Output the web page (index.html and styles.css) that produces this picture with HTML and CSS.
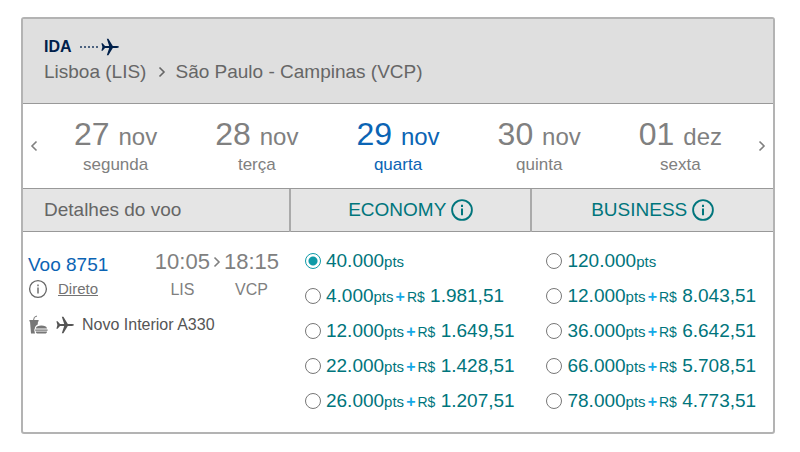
FILE: index.html
```html
<!DOCTYPE html>
<html lang="pt-BR">
<head>
    <meta charset="UTF-8">
    <meta name="viewport" content="width=device-width, initial-scale=1.0">
    <title>Voos de ida</title>
    <link rel="stylesheet" href="styles.css">
</head>
<body>

    <!-- Shared icons -->
    <svg class="sprite" aria-hidden="true">
        <symbol id="plane" viewBox="0 0 18 18">
            <path d="M0.4 5.2 L1.6 5.2 L4 8.1 L8.2 8.1 L5.8 0.8 L7.4 0.8 L11.8 8.1 L16 8.1 Q18 8.3 18 9 Q18 9.7 16 9.9 L11.8 9.9 L7.4 17.2 L5.8 17.2 L8.2 9.9 L4 9.9 L1.6 12.8 L0.4 12.8 L1.4 9 Z"/>
        </symbol>
        <symbol id="info" viewBox="0 0 24 24">
            <circle cx="12" cy="12" r="10.8" fill="none" stroke="currentColor" stroke-width="2"/>
            <path d="M10.9 6.2h2.2v2.4h-2.2z M10.9 10.4h2.2v7.2h-2.2z"/>
        </symbol>
        <symbol id="info-thin" viewBox="0 0 20 20">
            <circle cx="10" cy="10" r="8.4" fill="none" stroke="currentColor" stroke-width="1.3"/>
            <path d="M9.3 5.4h1.4v1.8h-1.4z M9.3 8.6h1.4v5.8h-1.4z"/>
        </symbol>
        <symbol id="chevron" viewBox="0 0 8 12">
            <path d="M1.5 1.5 L6 6 L1.5 10.5" fill="none" stroke="currentColor" stroke-width="1.6"/>
        </symbol>
    </svg>

    <main class="card">
        <header class="route">
            <h1 class="direction">
                IDA
                <span class="trail"></span>
                <svg class="icon-plane"><use href="#plane"/></svg>
            </h1>
            <p class="cities">
                Lisboa (LIS)
                <svg class="icon-chevron"><use href="#chevron"/></svg>
                São Paulo - Campinas (VCP)
            </p>
        </header>

        <nav class="dates">
            <button class="arrow" aria-label="Anterior"><svg class="icon-chevron left"><use href="#chevron"/></svg></button>
            <button class="date"><span class="day">27 <small>nov</small></span><span class="weekday">segunda</span></button>
            <button class="date"><span class="day">28 <small>nov</small></span><span class="weekday">terça</span></button>
            <button class="date active"><span class="day">29 <small>nov</small></span><span class="weekday">quarta</span></button>
            <button class="date"><span class="day">30 <small>nov</small></span><span class="weekday">quinta</span></button>
            <button class="date"><span class="day">01 <small>dez</small></span><span class="weekday">sexta</span></button>
            <button class="arrow" aria-label="Próximo"><svg class="icon-chevron"><use href="#chevron"/></svg></button>
        </nav>

        <table class="flights">
            <colgroup>
                <col class="col-details">
                <col class="col-economy">
                <col>
            </colgroup>
            <thead>
                <tr>
                    <th class="details-title">Detalhes do voo</th>
                    <th>
                        <span class="cabin">ECONOMY <button class="info-btn" aria-label="Sobre Economy"><svg class="icon-info"><use href="#info"/></svg></button></span>
                    </th>
                    <th>
                        <span class="cabin">BUSINESS <button class="info-btn" aria-label="Sobre Business"><svg class="icon-info"><use href="#info"/></svg></button></span>
                    </th>
                </tr>
            </thead>
            <tbody>
                <tr>
                    <td class="details">
                        <div class="summary">
                            <div class="flight">
                                <a class="flight-number" href="#">Voo 8751</a>
                                <span class="stops">
                                    <svg class="icon-info-small"><use href="#info-thin"/></svg>
                                    <a href="#">Direto</a>
                                </span>
                            </div>
                            <div class="times">
                                <div class="stop"><span class="time">10:05</span><span class="airport">LIS</span></div>
                                <svg class="icon-chevron"><use href="#chevron"/></svg>
                                <div class="stop"><span class="time">18:15</span><span class="airport">VCP</span></div>
                            </div>
                        </div>
                        <div class="aircraft">
                            <svg class="icon-meal" viewBox="0 0 20 20">
                                <path d="M1.4 5h9.2v1.4h-0.6l-0.3 3C8 10.2 6.8 11.6 6.8 13.4L6.2 15L7 18.6H3L2 6.4H1.4z"/>
                                <path d="M5.6 5L6.4 2.2L9 1" fill="none" stroke="currentColor" stroke-width="1"/>
                                <path d="M7.8 13.6C8.2 11.4 10.4 10.6 13.4 10.6s5.2 0.8 5.6 3z M7.2 14.4h12.4v1.4H7.2z M7.8 16.6h11.2c0 1.4-0.8 2-2 2h-7.2c-1.2 0-2-0.6-2-2z"/>
                            </svg>
                            <svg class="icon-plane"><use href="#plane"/></svg>
                            <span>Novo Interior A330</span>
                        </div>
                    </td>
                    <td class="fares">
                        <label class="fare"><input type="radio" name="fare" checked><span>40.000<small>pts</small></span></label>
                        <label class="fare"><input type="radio" name="fare"><span>4.000<small>pts</small><b>+</b><small class="currency">R$</small> 1.981,51</span></label>
                        <label class="fare"><input type="radio" name="fare"><span>12.000<small>pts</small><b>+</b><small class="currency">R$</small> 1.649,51</span></label>
                        <label class="fare"><input type="radio" name="fare"><span>22.000<small>pts</small><b>+</b><small class="currency">R$</small> 1.428,51</span></label>
                        <label class="fare"><input type="radio" name="fare"><span>26.000<small>pts</small><b>+</b><small class="currency">R$</small> 1.207,51</span></label>
                    </td>
                    <td class="fares">
                        <label class="fare"><input type="radio" name="fare"><span>120.000<small>pts</small></span></label>
                        <label class="fare"><input type="radio" name="fare"><span>12.000<small>pts</small><b>+</b><small class="currency">R$</small> 8.043,51</span></label>
                        <label class="fare"><input type="radio" name="fare"><span>36.000<small>pts</small><b>+</b><small class="currency">R$</small> 6.642,51</span></label>
                        <label class="fare"><input type="radio" name="fare"><span>66.000<small>pts</small><b>+</b><small class="currency">R$</small> 5.708,51</span></label>
                        <label class="fare"><input type="radio" name="fare"><span>78.000<small>pts</small><b>+</b><small class="currency">R$</small> 4.773,51</span></label>
                    </td>
                </tr>
            </tbody>
        </table>
    </main>

</body>
</html>
```
FILE: styles.css
```css
* {
    box-sizing: border-box;
}

body {
    margin: 0;
    padding: 17px 25px 17px 21px;
    background-color: #ffffff;
    color: #666666;
    font-family: "Liberation Sans", Arial, sans-serif;
    font-size: 19px;
}

button {
    padding: 0;
    border: none;
    background: none;
    color: inherit;
    font: inherit;
    cursor: pointer;
}

svg {
    flex: none;
    fill: currentColor;
}

.sprite {
    display: none;
}

.icon-plane {
    width: 18px;
    height: 18px;
}

.icon-chevron {
    width: 8px;
    height: 12px;
}

.left {
    transform: scaleX(-1);
}

.card {
    border: 2px solid #b3b3b3;
    border-radius: 3px;
}

/* Route header */
.route {
    padding: 16px 21px 18px;
    background-color: #dfdfdf;
    border-bottom: 1px solid #999999;
}

.direction {
    display: flex;
    align-items: center;
    margin: 0;
    color: #00204a;
    font-size: 16px;
    line-height: 24px;
}

.trail {
    width: 18px;
    margin: 0 3px 0 8px;
    height: 2px;
    background: repeating-linear-gradient(to right, #4d6380 0 2px, transparent 2px 4px);
}

.cities {
    display: flex;
    align-items: center;
    gap: 12px;
    margin: 0;
    line-height: 26px;
}

.cities .icon-chevron {
    margin-right: -3px;
}

/* Date picker */
.dates {
    display: flex;
    height: 85px;
    border-bottom: 1px solid #999999;
    color: #808080;
}

.arrow {
    width: 22px;
}

.date {
    flex: 1;
    display: flex;
    flex-direction: column;
    align-items: center;
    justify-content: flex-start;
    padding-top: 12px;
}

.day {
    font-size: 32px;
    line-height: 36px;
}

.day small {
    font-size: 24px;
}

.weekday {
    font-size: 17px;
    line-height: 20px;
}

.active {
    color: #0b64b4;
}

/* Flights table */
.flights {
    width: 100%;
    border-collapse: collapse;
    table-layout: fixed;
}

.col-details {
    width: 35.6%;
}

.col-economy {
    width: 32.2%;
}

th {
    height: 42px;
    padding: 0;
    background-color: #e5e5e5;
    border-bottom: 1px solid #999999;
    font-weight: normal;
}

th + th {
    border-left: 2px solid #aaaaaa;
    color: #00757c;
}

.details-title {
    padding-left: 21px;
    text-align: left;
}

.cabin {
    display: flex;
    align-items: center;
    justify-content: center;
    gap: 5px;
}

.info-btn {
    display: flex;
}

.icon-info {
    width: 22px;
    height: 22px;
}

td {
    padding: 0;
    vertical-align: top;
}

.details {
    padding: 16px 5px 0;
}

.summary {
    display: flex;
    justify-content: space-between;
    padding-right: 6px;
}

.flight {
    display: flex;
    flex-direction: column;
    padding-top: 5px;
    line-height: 24px;
}

.flight-number {
    color: #0b64b4;
    text-decoration: none;
}

.stops {
    display: flex;
    align-items: center;
    gap: 10px;
    font-size: 15px;
}

.stops a {
    color: #737373;
}

.icon-info-small {
    width: 20px;
    height: 20px;
}

.times {
    display: flex;
    gap: 3px;
    color: #808080;
}

.times .icon-chevron {
    margin-top: 8px;
}

.stop {
    display: flex;
    flex-direction: column;
    align-items: center;
}

.time {
    font-size: 22px;
    line-height: 28px;
}

.airport {
    font-size: 16px;
    line-height: 28px;
}

.aircraft {
    display: flex;
    align-items: center;
    gap: 8px;
    margin-top: 9px;
    color: #555555;
    font-size: 16px;
    line-height: 24px;
}

.icon-meal {
    width: 20px;
    height: 20px;
    color: #777777;
}

/* Fare options */
.fares {
    padding: 12px 0 13px 15px;
    color: #00757c;
}

.fare {
    display: flex;
    align-items: center;
    gap: 5px;
    height: 35px;
    white-space: nowrap;
    cursor: pointer;
}

.fare input {
    appearance: none;
    width: 16px;
    height: 16px;
    margin: 0;
    border: 1px solid #777777;
    border-radius: 50%;
    background-color: #ffffff;
}

.fare input:checked {
    border-color: #0e9aa7;
    background: radial-gradient(circle, #0e9aa7 4px, #ffffff 5px);
}

.fare small {
    font-size: 15px;
}

.fare .currency {
    font-size: 14px;
}

.fare b {
    margin: 0 2px;
    color: #14a9e8;
    font-size: 16px;
}
```
